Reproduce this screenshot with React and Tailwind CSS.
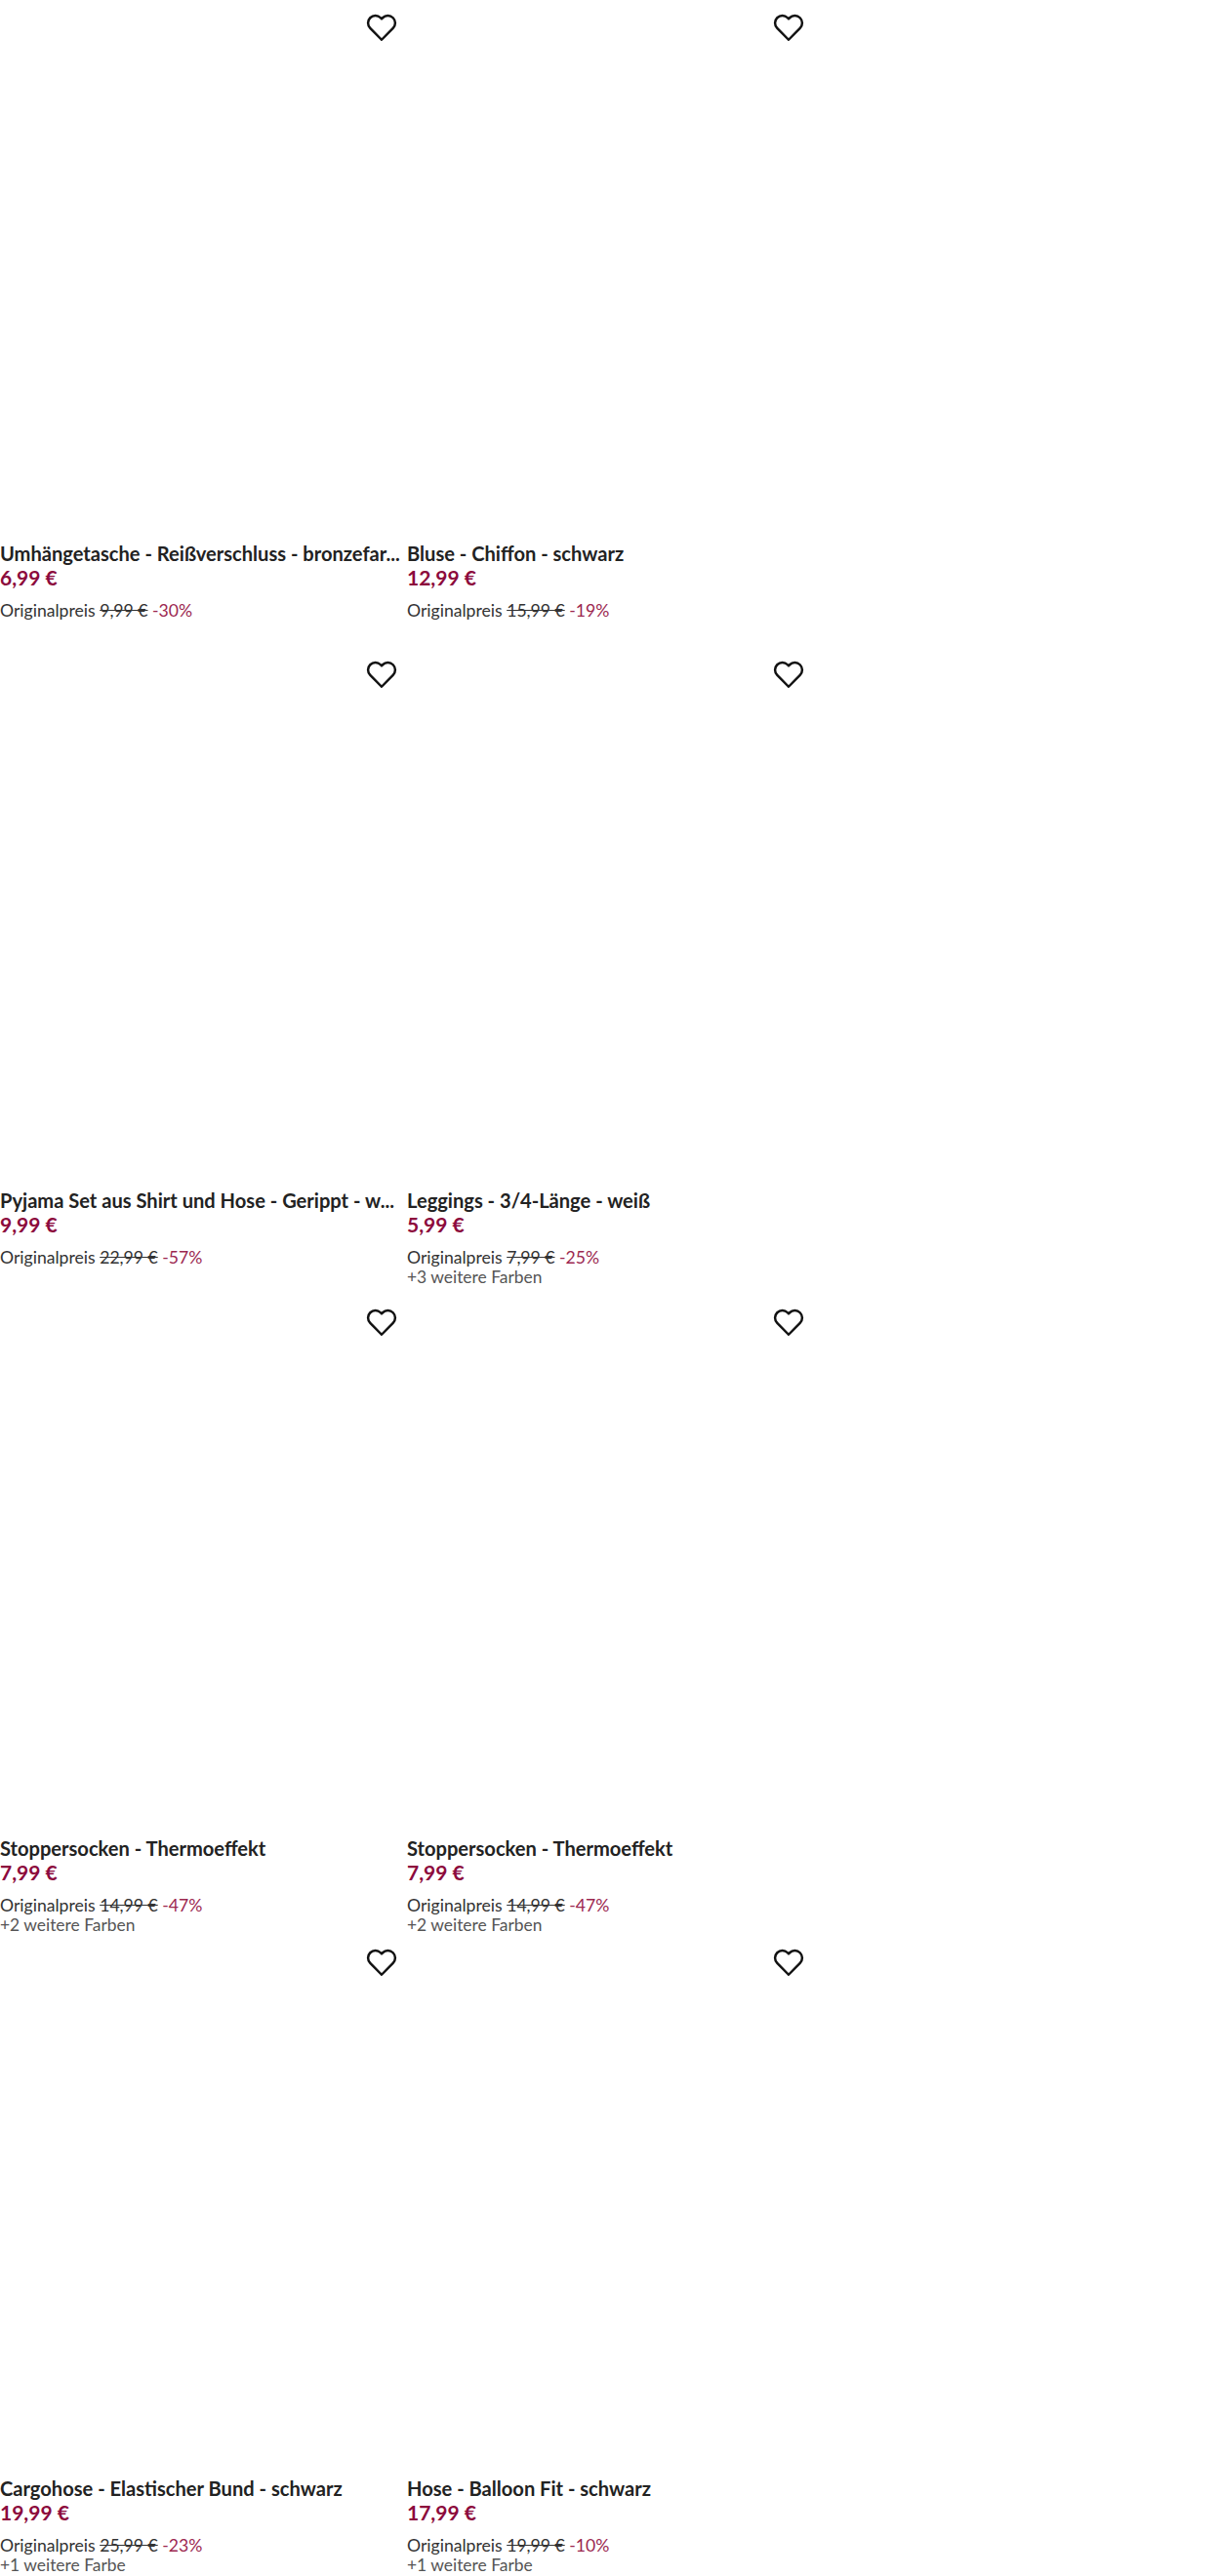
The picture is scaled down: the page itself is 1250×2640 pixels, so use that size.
const HEART = "M12 20.5l-7.8-7.9a5 5 0 0 1 0-7.1 5 5 0 0 1 7.1 0l.7.7.7-.7a5 5 0 0 1 7.1 0 5 5 0 0 1 0 7.1z";

function Heart() {
  return (
    <button className="absolute top-[10px] right-[6px] w-9 h-9 flex items-center justify-center">
      <svg width="36" height="36" viewBox="0 0 24 24" fill="none" stroke="#111" strokeWidth="1.65" strokeLinejoin="round">
        <path d={HEART} />
      </svg>
    </button>
  );
}

function Card({ title, price, original, discount, more }) {
  return (
    <div className="relative w-[415px] overflow-hidden">
      <Heart />
      <div className="h-[555px]" />
      <div className="text-[20.1px] leading-[24px] font-bold text-[#222] whitespace-nowrap">{title}</div>
      <div className="text-[21px] leading-[25px] font-bold text-[#8c0a3c]">{price}</div>
      <div className="mt-[11px] text-[17.6px] leading-[21px] text-[#333]">
        Originalpreis <span className="line-through">{original}</span> <span className="text-[#9c2850]">{discount}</span>
      </div>
      {more && <div className="text-[17.4px] leading-[20px] text-[#555]">{more}</div>}
    </div>
  );
}

const rows = [
  { h: "h-[663px]", items: [
    { title: "Umhängetasche - Reißverschluss - bronzefar...", price: "6,99 €", original: "9,99 €", discount: "-30%" },
    { title: "Bluse - Chiffon - schwarz", price: "12,99 €", original: "15,99 €", discount: "-19%" },
  ]},
  { h: "h-[664px]", items: [
    { title: "Pyjama Set aus Shirt und Hose - Gerippt - w...", price: "9,99 €", original: "22,99 €", discount: "-57%" },
    { title: "Leggings - 3/4-Länge - weiß", price: "5,99 €", original: "7,99 €", discount: "-25%", more: "+3 weitere Farben" },
  ]},
  { h: "h-[656px]", items: [
    { title: "Stoppersocken - Thermoeffekt", price: "7,99 €", original: "14,99 €", discount: "-47%", more: "+2 weitere Farben" },
    { title: "Stoppersocken - Thermoeffekt", price: "7,99 €", original: "14,99 €", discount: "-47%", more: "+2 weitere Farben" },
  ]},
  { h: "h-[657px]", items: [
    { title: "Cargohose - Elastischer Bund - schwarz", price: "19,99 €", original: "25,99 €", discount: "-23%", more: "+1 weitere Farbe" },
    { title: "Hose - Balloon Fit - schwarz", price: "17,99 €", original: "19,99 €", discount: "-10%", more: "+1 weitere Farbe" },
  ]},
];

export default function App() {
  return (
    <div className="w-[1250px] h-[2640px] overflow-hidden bg-white font-['Lato',sans-serif]">
      {rows.map((r, i) => (
        <div key={i} className={`flex gap-[2px] ${r.h}`}>
          {r.items.map((c, j) => <Card key={j} {...c} />)}
        </div>
      ))}
    </div>
  );
}
